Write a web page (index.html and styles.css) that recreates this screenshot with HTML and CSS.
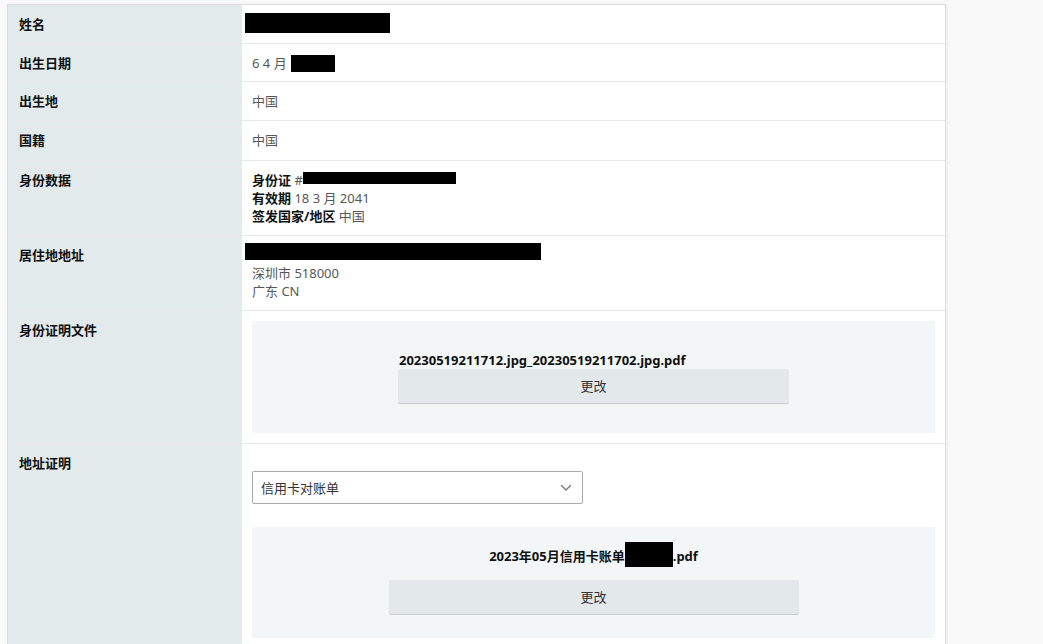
FILE: index.html
```html
<!DOCTYPE html>
<html lang="zh-CN">
<head>
<meta charset="utf-8">
<title>身份信息</title>
<link rel="stylesheet" href="styles.css">
</head>
<body>
<div class="sheet">
  <div class="row">
    <div class="label">姓名</div>
    <div class="value"><span class="redact redact-name"></span></div>
  </div>
  <div class="row row-short">
    <div class="label">出生日期</div>
    <div class="value">6 4 月 <span class="redact redact-year"></span></div>
  </div>
  <div class="row">
    <div class="label">出生地</div>
    <div class="value">中国</div>
  </div>
  <div class="row row-tall">
    <div class="label">国籍</div>
    <div class="value">中国</div>
  </div>
  <div class="row">
    <div class="label">身份数据</div>
    <div class="value">
      <div><b>身份证</b> #<span class="redact redact-id"></span></div>
      <div><b>有效期</b> 18 3 月 2041</div>
      <div><b>签发国家/地区</b> 中国</div>
    </div>
  </div>
  <div class="row">
    <div class="label">居住地地址</div>
    <div class="value">
      <div class="addr-line"><span class="redact redact-addr"></span></div>
      <div>深圳市 518000</div>
      <div>广东 CN</div>
    </div>
  </div>
  <div class="row">
    <div class="label">身份证明文件</div>
    <div class="value">
      <div class="upload upload-id">
        <div class="upload-col upload-col-id">
          <div class="filename filename-left">20230519211712.jpg_20230519211702.jpg.pdf</div>
          <div class="btn">更改</div>
        </div>
      </div>
    </div>
  </div>
  <div class="row row-last">
    <div class="label">地址证明</div>
    <div class="value">
      <div class="select">
        <span>信用卡对账单</span>
        <svg class="chev" width="12" height="8" viewBox="0 0 12 8"><path d="M1.5 1.5 L6 6 L10.5 1.5" fill="none" stroke="#777" stroke-width="1.4" stroke-linecap="round" stroke-linejoin="round"/></svg>
      </div>
      <div class="upload upload-addr">
        <div class="upload-col upload-col-addr">
          <div class="filename">2023年05月信用卡账单<span class="redact redact-file"></span>.pdf</div>
          <div class="btn">更改</div>
        </div>
      </div>
    </div>
  </div>
</div>
</body>
</html>
```

FILE: styles.css
```css
html, body {
  margin: 0;
  padding: 0;
}
body {
  background: #f9f9f9;
  font-family: "Noto Sans", "Noto Sans CJK SC", sans-serif;
  font-size: 13px;
  line-height: 18px;
  color: #555858;
  height: 644px;
  overflow: hidden;
}
.sheet {
  margin: 4px 0 0 7px;
  width: 937px;
  border: 1px solid #dedede;
  border-bottom: none;
  background: #fff;
  box-shadow: 1px 0 3px rgba(0, 0, 0, 0.06);
}
.row {
  display: grid;
  grid-template-columns: 234px 1fr;
  border-bottom: 1px solid #e8e8e8;
}
.row-short .value,
.row-short .label {
  padding-bottom: 9px;
}
.row-tall .value,
.row-tall .label {
  padding-bottom: 11px;
}
.row-last {
  border-bottom: none;
  min-height: 220px;
}
.label {
  background: #e3eaec;
  color: #0f1111;
  font-weight: 700;
  padding: 10px 11px;
}
.value {
  padding: 10px 10px;
}
.value b {
  color: #0f1111;
  font-weight: 700;
}
.redact {
  display: inline-block;
  background: #000;
  vertical-align: top;
}
.redact-name {
  width: 145px;
  height: 20px;
  margin-left: -7px;
  margin-top: -2px;
}
.redact-year {
  width: 44px;
  height: 17px;
  margin-left: 1px;
  margin-top: 1px;
}
.redact-id {
  width: 153px;
  height: 12px;
  margin-top: 1px;
}
.redact-file {
  width: 48px;
  height: 25px;
  margin-top: -5px;
  margin-bottom: -2px;
}
.addr-line {
  display: flow-root;
  height: 18px;
}
.redact-addr {
  display: block;
  width: 296px;
  height: 17px;
  margin-left: -7px;
  margin-top: -3px;
}
.upload {
  background: #f3f6f7;
  display: flex;
  justify-content: center;
}
.upload-id {
  padding: 30px 0 30px;
}
.upload-addr {
  padding: 20px 0 24px;
  margin-top: 23px;
}
.upload-col {
  display: flex;
  flex-direction: column;
}
.upload-col-id {
  width: 391px;
}
.upload-col-addr {
  width: 410px;
  gap: 15px;
}
.filename {
  color: #0f1111;
  font-weight: 700;
  text-align: center;
  white-space: nowrap;
}
.filename-left {
  text-align: left;
  padding-left: 1px;
}
.btn {
  height: 34px;
  line-height: 34px;
  text-align: center;
  background: #e3e8ea;
  color: #333;
  border-radius: 2px;
  box-shadow: 0 1px 0 #c9cfd1;
}
.select {
  box-sizing: border-box;
  margin-top: 17px;
  width: 331px;
  height: 33px;
  border: 1px solid #a9a9a9;
  border-radius: 2px;
  padding: 0 8px;
  display: flex;
  align-items: center;
  justify-content: space-between;
  color: #333;
  background: #fff;
}
.chev {
  margin-right: 2px;
}
```
